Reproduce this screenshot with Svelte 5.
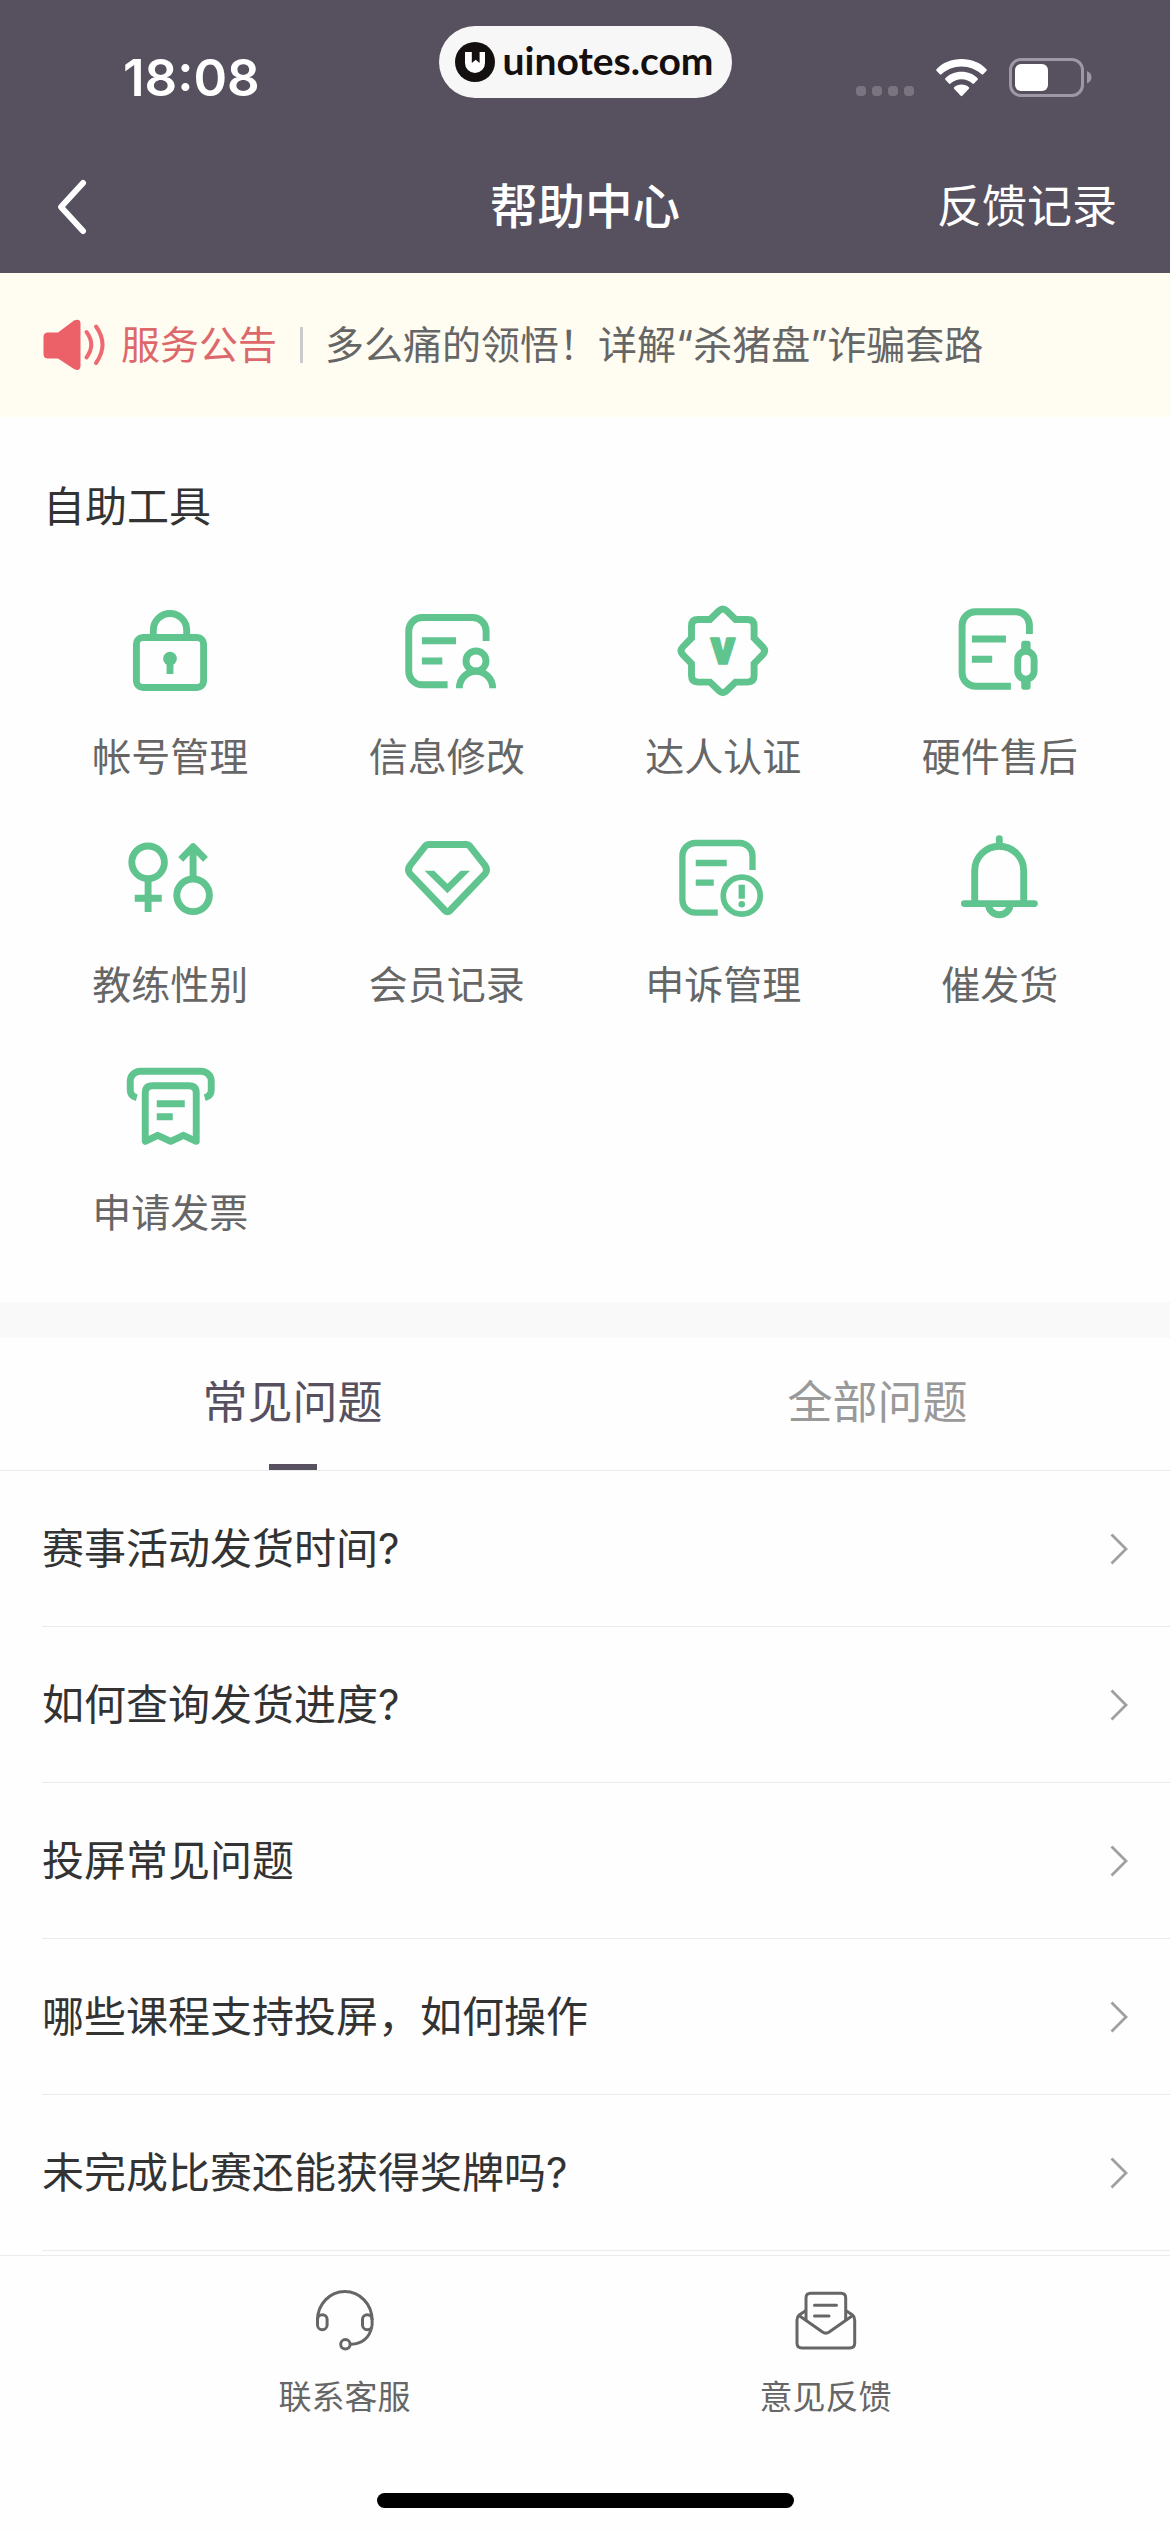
<script>
  let activeTab = $state(0);

  const tabs = ["常见问题", "全部问题"];

  const tools = [
    { icon: "lock", label: "帐号管理" },
    { icon: "profile", label: "信息修改" },
    { icon: "badge", label: "达人认证" },
    { icon: "hardware", label: "硬件售后" },
    { icon: "gender", label: "教练性别" },
    { icon: "member", label: "会员记录" },
    { icon: "appeal", label: "申诉管理" },
    { icon: "bell", label: "催发货" },
    { icon: "invoice", label: "申请发票" },
  ];

  const questions = [
    "赛事活动发货时间?",
    "如何查询发货进度?",
    "投屏常见问题",
    "哪些课程支持投屏，如何操作",
    "未完成比赛还能获得奖牌吗?",
  ];
</script>

<div class="page">
  <header class="header">
    <div class="status">
      <span class="time">18:08</span>
      <div class="pill">
        <svg class="pill-logo" viewBox="0 0 40 40">
          <circle cx="20" cy="20" r="20" fill="#14100f" />
          <path d="M10 10h6.800v11l3.900-3.200 3.900 3.200V10H30v11a10 10 0 0 1-20 0z" fill="#fff" />
        </svg>
        <span class="pill-text">uinotes.com</span>
      </div>
      <div class="signals">
        <div class="dots"><i></i><i></i><i></i><i></i></div>
        <svg class="wifi" viewBox="0 0 51 38" fill="#fff">
          <path d="M25.500 0C35.500 0 44.400 3.700 50.500 10.200Q51.300 11 50.500 11.800L47.200 15.200Q46.400 16 45.600 15.200C40.200 10.200 33.200 7.400 25.500 7.400S10.800 10.200 5.400 15.200Q4.600 16 3.800 15.200L.5 11.800Q-.3 11 .5 10.200C6.600 3.700 15.500 0 25.500 0z" />
          <path d="M25.500 12.800C32 12.800 37.600 15.200 41.600 19.200Q42.400 20 41.600 20.800L38 24.500Q37.200 25.300 36.400 24.500C33.600 21.900 29.800 20.300 25.500 20.300S17.400 21.900 14.600 24.500Q13.800 25.300 13 24.500L9.400 20.800Q8.600 20 9.400 19.200C13.400 15.200 19 12.800 25.500 12.800z" />
          <path d="M25.500 25.600C28.400 25.600 31 26.700 32.900 28.300Q33.600 29 32.900 29.800L26.300 36.800Q25.500 37.500 24.700 36.800L18.100 29.800Q17.400 29 18.100 28.300C20 26.700 22.600 25.600 25.500 25.600z" />
        </svg>
        <svg class="battery" viewBox="0 0 83 39">
          <rect x="1.500" y="1.500" width="72" height="36" rx="10.500" fill="none" stroke="#9d98a3" stroke-width="3" />
          <rect x="6" y="6" width="33" height="27" rx="6" fill="#fff" />
          <path d="M78 13v12.500q4.500-2 4.500-6.200T78 13z" fill="#9d98a3" />
        </svg>
      </div>
    </div>
    <nav class="nav">
      <button class="back" aria-label="返回">
        <svg viewBox="0 0 32 56" fill="none" stroke="#fff" stroke-width="6" stroke-linecap="round" stroke-linejoin="round">
          <path d="M27 4L5 28L27 52" />
        </svg>
      </button>
      <h1>帮助中心</h1>
      <a class="records" href="#records">反馈记录</a>
    </nav>
  </header>

  <section class="notice">
    <svg class="speaker" viewBox="0 0 62 52">
      <path d="M5 13.500H15L31 1.500Q37 -1 37.500 4V47Q37 53 31 50L15 39.500H5Q.5 39.500 .5 35V18Q.5 13.500 5 13.500z" fill="#ec6068" />
      <path d="M43.500 13Q53 25.500 43.500 38.500M53 7.500Q66 25.500 53 44" fill="none" stroke="#ec6a70" stroke-width="4" stroke-linecap="round" />
    </svg>
    <span class="notice-tag">服务公告</span>
    <span class="notice-line"></span>
    <span class="notice-text">多么痛的领悟！详解“杀猪盘”诈骗套路</span>
  </section>

  <section class="tools">
    <h2>自助工具</h2>
    <div class="grid">
      {#each tools as tool}
        <div class="tool">
          <svg class="tool-icon" viewBox="0 0 96 96">
            {#if tool.icon === "lock"}
              <rect x="14.400" y="34.500" width="67.200" height="50" rx="6.500" />
              <path d="M31.300 36V27.200a16.700 16.700 0 0 1 33.400 0V36" />
              <circle class="solid" cx="48" cy="55.700" r="6.900" />
              <path d="M48 58V71" />
            {:else if tool.icon === "profile"}
              <path d="M87.100 38V28a13.500 13.500 0 0 0-13.500-13.500H23.250A13.500 13.500 0 0 0 9.750 28V68.300a13.500 13.500 0 0 0 13.500 13.500H48.600" />
              <path d="M22.900 37.700H57M22.900 58H43.300" />
              <circle cx="77" cy="58" r="10" />
              <path d="M60.300 85.300a16.700 17 0 0 1 33.400 0" />
            {:else if tool.icon === "badge"}
              <path d="M35 16.500L44 7.800Q47.800 4.200 51.600 7.800L60.600 16.500H72.600Q79.100 16.500 79.100 23V35L87.800 44Q91.400 47.800 87.800 51.600L79.100 60.600V72.600Q79.100 79.100 72.600 79.100H60.600L51.600 87.800Q47.800 91.400 44 87.800L35 79.100H23Q16.500 79.100 16.500 72.600V60.600L7.800 51.600Q4.200 47.800 7.800 44L16.500 35V23Q16.500 16.500 23 16.500z" />
              <text class="badge-v" x="47.800" y="61" text-anchor="middle">v</text>
            {:else if tool.icon === "hardware"}
              <path d="M77.400 31V22.300a13.500 13.500 0 0 0-13.500-13.500H23.600a13.500 13.500 0 0 0-13.500 13.500V69.700a13.500 13.500 0 0 0 13.500 13.500H58.900" />
              <path d="M19.900 36H53.900M19.900 56.300H40.200" />
              <rect x="65.700" y="48.200" width="16.400" height="28" rx="8.200" />
              <rect class="solid" x="69.200" y="37.700" width="9.400" height="11" rx="3" />
              <rect class="solid" x="69.200" y="76" width="9.400" height="10.700" rx="3" />
            {:else if tool.icon === "gender"}
              <circle cx="26.100" cy="31.300" r="16.300" />
              <path d="M26.100 47.600V81M12.750 67.300H39.750" />
              <circle cx="71.100" cy="64.300" r="16.300" />
              <path d="M71.100 48V17M58.700 28.300L71.100 15.700L83.500 28.300" stroke-linejoin="round" />
            {:else if tool.icon === "member"}
              <path d="M29.500 13.500H67.500Q69.500 13.500 71 15.300L86 34.500Q89 39 86 42.800L51 79.500Q48.500 82 46 79.500L11 42.800Q8 39 11 34.500L26 15.300Q27.500 13.500 29.500 13.500z" />
              <path class="solid" d="M25.600 39.700H35.200L48.400 52.800L61.700 39.700H71L48.400 62.300z" />
            {:else if tool.icon === "appeal"}
              <g class="thin">
                <path d="M77.500 39V25A13 13 0 0 0 64.500 12H20.400A13 13 0 0 0 7.400 25V68.700A13 13 0 0 0 20.400 81.700H42.750" />
                <path d="M20.750 32H51.750M20.750 51.700H38.750" />
                <circle class="ring" cx="66.750" cy="64.700" r="18.500" />
                <path d="M66.750 53.700V67.700" />
              </g>
              <circle class="solid" cx="66.750" cy="73.200" r="3.300" />
            {:else if tool.icon === "bell"}
              <path d="M22.700 72V39.700a24.500 24.500 0 0 1 49 0V72" />
              <path d="M12.400 72.600H82.400M47.300 7.800V14" stroke-linecap="round" />
              <path d="M36.500 73.500a10.800 10.200 0 0 0 21.600 0" />
            {:else}
              <path d="M14.750 38.800Q8.250 37 8.250 31V22a10 10 0 0 1 10-9.800H79.250a10 10 0 0 1 10 9.800V31Q89.250 37 82.750 38.800" />
              <path d="M23.250 82.300V34Q23.250 26.800 30.500 26.800H67Q74.250 26.800 74.250 34V82.300L61.400 76.300L48.700 82.300L35.750 76.300z" stroke-linejoin="round" />
              <path d="M34.750 44.700H62.750M34.750 57.700H50.750" />
            {/if}
          </svg>
          <span>{tool.label}</span>
        </div>
      {/each}
    </div>
  </section>

  <section class="faq">
    <div class="tabs">
      {#each tabs as tab, i}
        <button class="tab" class:active={activeTab === i} onclick={() => (activeTab = i)}>
          {tab}
        </button>
      {/each}
    </div>
    <ul class="questions">
      {#each questions as question}
        <li>
          <span>{question}</span>
          <svg class="arrow" viewBox="0 0 18 32" fill="none" stroke="#a0a0a0" stroke-width="2.800">
            <path d="M1.500 1.500L16 16L1.500 30.500" />
          </svg>
        </li>
      {/each}
    </ul>
  </section>

  <footer class="footer">
    <div class="actions">
      <div class="action">
        <svg viewBox="0 0 60 62">
          <path d="M2.500 30a27.300 28.500 0 0 1 54.600 0" />
          <rect x="2.500" y="24.700" width="9.600" height="15" rx="4.800" />
          <rect x="47.500" y="24.700" width="9.600" height="15" rx="4.800" />
          <path d="M56.800 37Q53 53.500 36 54.300" />
          <circle cx="30.400" cy="54.300" r="4.700" />
        </svg>
        <span>联系客服</span>
      </div>
      <div class="action">
        <svg viewBox="0 0 60 62">
          <path d="M10 31V8Q10 3.300 14.700 3.300H45Q49.700 3.300 49.700 8V31" />
          <path d="M10 20.500L3.200 25Q1 26.700 1 30V53Q1 58 6 58H53.700Q58.700 58 58.700 53V30Q58.700 26.700 56.500 25L49.700 20.500" />
          <path d="M3 25.500L26.500 42Q29.800 44.300 33.200 42L56.700 25.500" />
          <path d="M18.500 15.300H40.500M18.500 26H33" stroke-linecap="round" />
        </svg>
        <span>意见反馈</span>
      </div>
    </div>
    <div class="home-bar"></div>
  </footer>
</div>

<style>
  :global(body) {
    margin: 0;
    background: #fefefe;
  }
  .page {
    display: flex;
    flex-direction: column;
    width: 1170px;
    height: 2532px;
    overflow: hidden;
    background: #fefefe;
    color: #333;
    font-family: Inter, "Noto Sans CJK SC", sans-serif;
  }
  button {
    padding: 0;
    border: 0;
    background: none;
    font: inherit;
  }
  h1,
  h2,
  ul {
    margin: 0;
    padding: 0;
  }
  svg {
    display: block;
    overflow: visible;
  }

  /* header */
  .header {
    height: 273px;
    flex: none;
    background: #57505f;
    color: #fff;
  }
  .status {
    display: grid;
    grid-template-columns: 1fr 293px 1fr;
    height: 140px;
    padding-top: 26px;
    box-sizing: border-box;
  }
  .time {
    padding: 21px 0 0 123px;
    font-size: 51px;
    font-weight: 600;
    line-height: 62px;
  }
  .pill {
    display: flex;
    align-items: center;
    gap: 8px;
    height: 72px;
    padding-left: 16px;
    box-sizing: border-box;
    border-radius: 36px;
    background: #f7f7f7;
  }
  .pill-logo {
    width: 40px;
    height: 40px;
  }
  .pill-text {
    padding-bottom: 4px;
    color: #14100f;
    font-family: Lato, sans-serif;
    font-size: 39px;
    font-weight: 700;
    line-height: 46px;
  }
  .signals {
    display: flex;
    justify-content: flex-end;
    height: 39px;
    padding: 32px 78px 0 0;
  }
  .dots {
    display: flex;
    align-items: flex-end;
    gap: 6px;
    padding-bottom: 1px;
  }
  .dots i {
    width: 10px;
    height: 10px;
    border-radius: 4px;
    background: #7a7480;
  }
  .wifi {
    width: 51px;
    height: 38px;
    margin: 1px 22px 0;
  }
  .battery {
    width: 83px;
    height: 39px;
  }
  .nav {
    display: grid;
    grid-template-columns: 1fr auto 1fr;
    align-items: center;
    height: 133px;
  }
  .back {
    width: 32px;
    height: 56px;
    margin-left: 56px;
  }
  .nav h1 {
    font-size: 47.500px;
    font-weight: 500;
    line-height: 70px;
  }
  .records {
    justify-self: end;
    margin-right: 53px;
    color: #fff;
    font-size: 45px;
    line-height: 66px;
    text-decoration: none;
  }

  /* notice */
  .notice {
    display: flex;
    align-items: center;
    flex: none;
    height: 144px;
    padding-left: 43px;
    background: #fffcf1;
    font-size: 39px;
    line-height: 58px;
    white-space: nowrap;
  }
  .speaker {
    width: 62px;
    height: 52px;
  }
  .notice-tag {
    margin-left: 16px;
    color: #dd686b;
  }
  .notice-line {
    width: 3px;
    height: 36px;
    margin: 0 22px 0 23px;
    background: #ccc;
  }
  .notice-text {
    color: #666;
  }

  /* tools */
  .tools {
    flex: none;
    height: 885px;
  }
  .tools h2 {
    padding: 59px 0 0 43px;
    font-size: 42px;
    font-weight: 400;
    line-height: 62px;
  }
  .grid {
    display: grid;
    grid-template-columns: repeat(4, 1fr);
    grid-auto-rows: 228px;
    padding: 65px 32px 0;
  }
  .tool {
    display: flex;
    flex-direction: column;
    align-items: center;
    gap: 29px;
    color: #666;
    font-size: 39px;
    line-height: 58px;
  }
  .tool-icon {
    width: 96px;
    height: 96px;
    fill: none;
    stroke: #60c48e;
    stroke-width: 6.900;
  }
  .solid {
    fill: #60c48e;
    stroke: none;
  }
  .thin {
    stroke-width: 6.300;
  }
  .ring {
    stroke-width: 5.700;
  }
  .badge-v {
    fill: #60c48e;
    stroke-width: 1.500;
    stroke-linejoin: round;
    font-family: Roboto, sans-serif;
    font-size: 48px;
    font-weight: 900;
  }

  /* questions */
  .faq {
    flex: 1;
    border-top: 36px solid #f9f9f9;
  }
  .tabs {
    display: grid;
    grid-template-columns: 1fr 1fr;
    height: 132px;
    border-bottom: 1px solid #ebebeb;
  }
  .tab {
    display: flex;
    flex-direction: column;
    align-items: center;
    justify-content: space-between;
    padding-top: 32px;
    color: #999;
    font-size: 45px;
    line-height: 66px;
  }
  .tab::after {
    content: "";
    width: 48px;
    height: 6px;
  }
  .tab.active {
    color: #57505f;
  }
  .tab.active::after {
    background: #57505f;
  }
  .questions {
    list-style: none;
  }
  .questions li {
    display: flex;
    align-items: center;
    justify-content: space-between;
    height: 155px;
    margin-left: 42px;
    padding-right: 42px;
    border-bottom: 1px solid #ebebeb;
    font-size: 42px;
    line-height: 62px;
  }
  .arrow {
    width: 18px;
    height: 32px;
  }

  /* footer */
  .footer {
    display: flex;
    flex-direction: column;
    align-items: center;
    justify-content: space-between;
    flex: none;
    height: 277px;
    padding-bottom: 24px;
    box-sizing: border-box;
    border-top: 1px solid #ebebeb;
  }
  .actions {
    display: grid;
    grid-template-columns: repeat(2, 481px);
    padding-top: 34px;
  }
  .action {
    display: flex;
    flex-direction: column;
    align-items: center;
    gap: 21px;
    color: #666;
    font-size: 33px;
    line-height: 48px;
  }
  .action svg {
    width: 60px;
    height: 62px;
    fill: none;
    stroke: #666;
    stroke-width: 3;
  }
  .home-bar {
    width: 417px;
    height: 15px;
    border-radius: 8px;
    background: #000;
  }
</style>
